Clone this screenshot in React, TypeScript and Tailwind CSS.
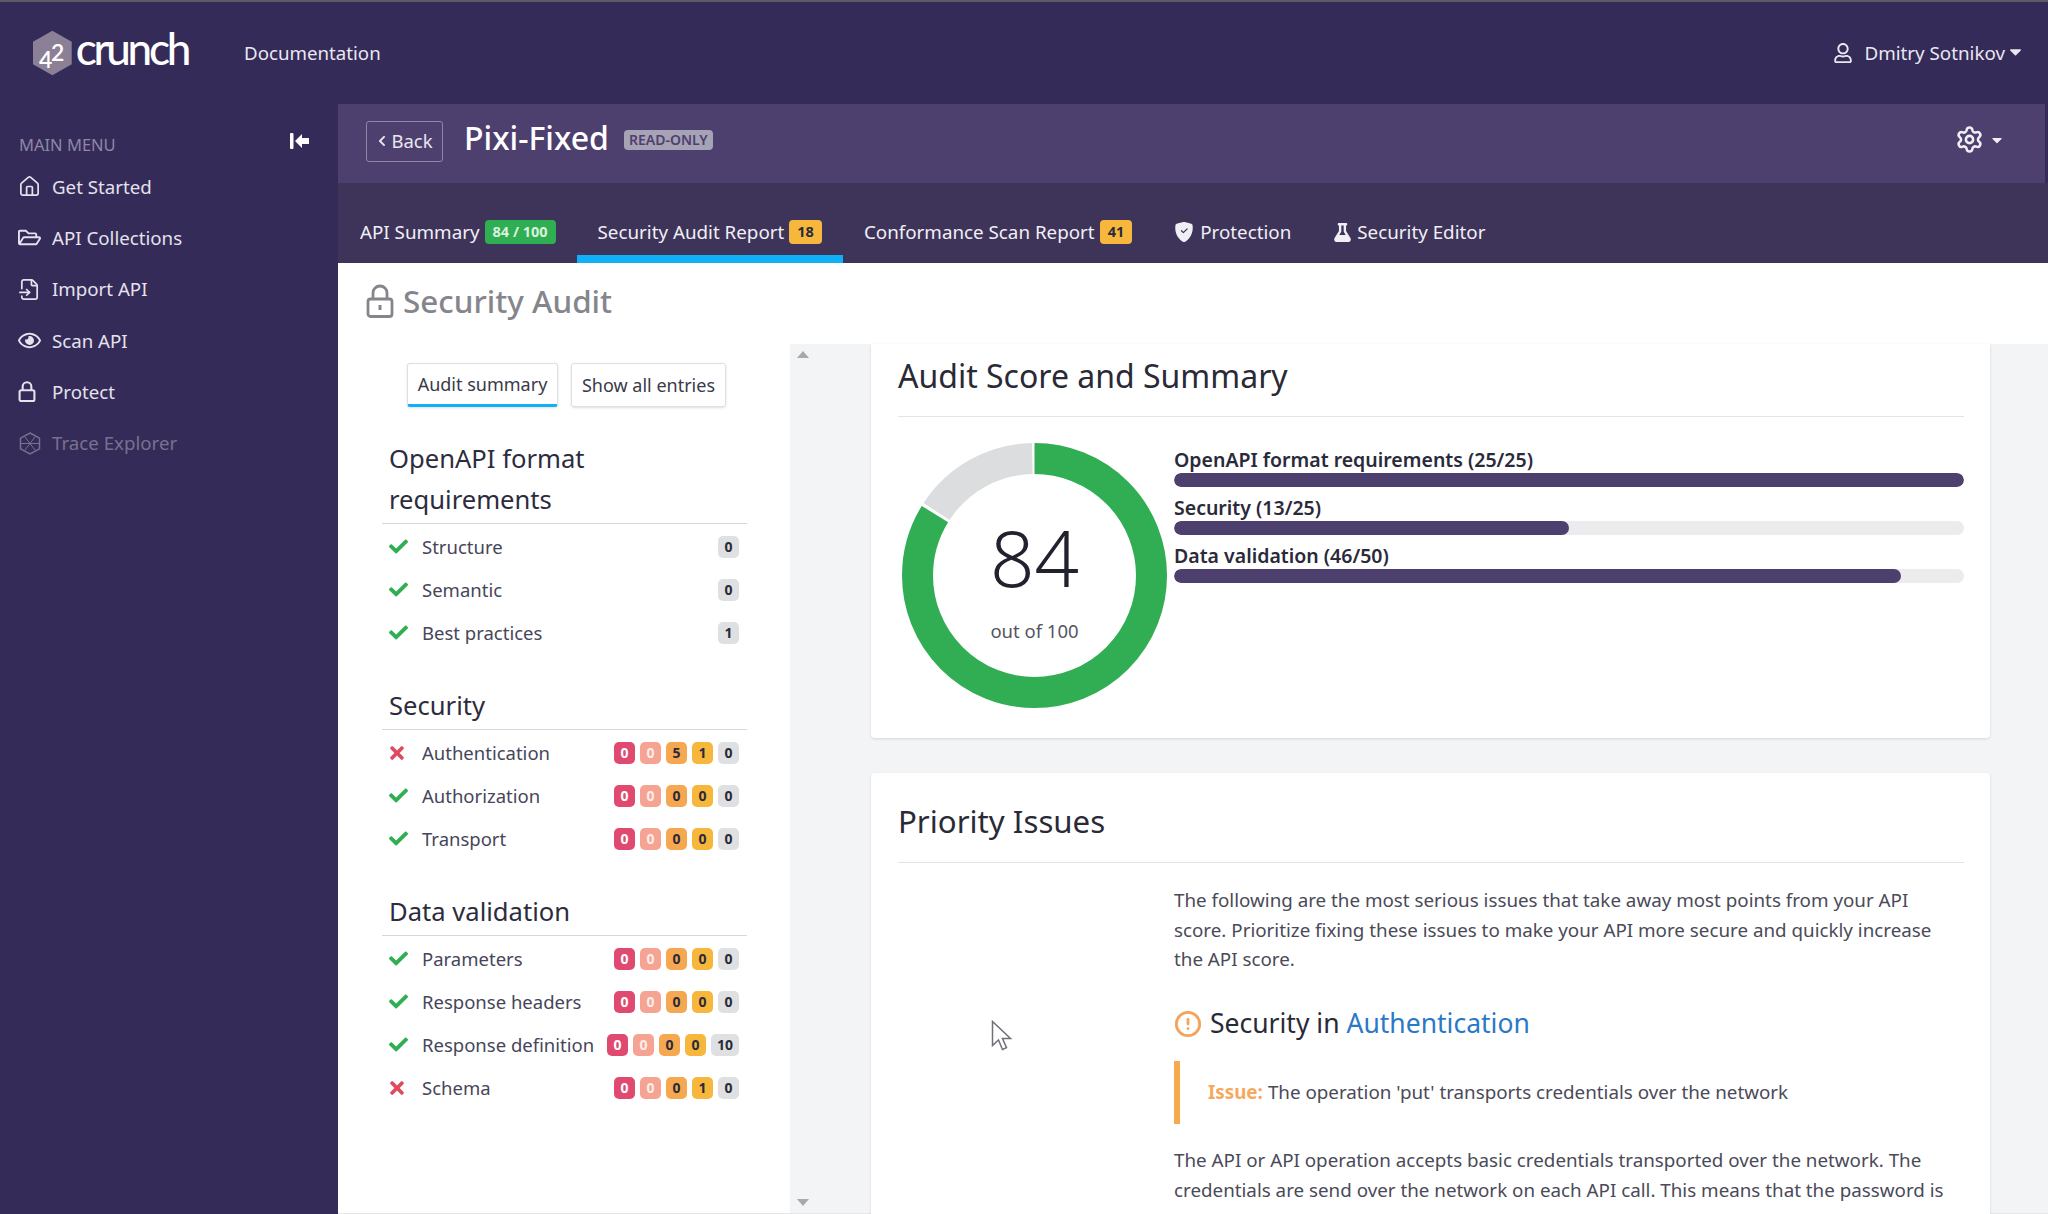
import { CircleAlert, FileInput, House, Settings } from "lucide-react";
import { BsShieldFillCheck } from "react-icons/bs";
import { FaCaretDown, FaCheck, FaChevronLeft, FaFlask, FaRegEye, FaRegFolderOpen, FaRegUser, FaTimes } from "react-icons/fa";

function Padlock({ width, height, strokeWidth, keyhole }: { width: number; height: number; strokeWidth: number; keyhole?: boolean }) {
  return (
    <svg width={width} height={height} viewBox="0 0 28 34" fill="none" stroke="currentColor" strokeWidth={strokeWidth}>
      <path d="M7 15V9a7 7 0 0 1 14 0v6" />
      <rect x="2" y="15" width="24" height="17.5" rx="2.5" />
      {keyhole && <path d="M14 21v5" strokeWidth={3} />}
    </svg>
  );
}

const menu = [
  { label: "Get Started", icon: <House size={23} strokeWidth={1.8} /> },
  { label: "API Collections", icon: <FaRegFolderOpen size={23} /> },
  { label: "Import API", icon: <FileInput size={23} strokeWidth={1.8} /> },
  { label: "Scan API", icon: <FaRegEye size={23} /> },
  { label: "Protect", icon: <Padlock width={18} height={21} strokeWidth={3.4} /> },
];

const sections = [
  {
    title: ["OpenAPI format", "requirements"],
    rows: [
      { name: "Structure", ok: true, counts: [0] },
      { name: "Semantic", ok: true, counts: [0] },
      { name: "Best practices", ok: true, counts: [1] },
    ],
  },
  {
    title: ["Security"],
    rows: [
      { name: "Authentication", ok: false, counts: [0, 0, 5, 1, 0] },
      { name: "Authorization", ok: true, counts: [0, 0, 0, 0, 0] },
      { name: "Transport", ok: true, counts: [0, 0, 0, 0, 0] },
    ],
  },
  {
    title: ["Data validation"],
    rows: [
      { name: "Parameters", ok: true, counts: [0, 0, 0, 0, 0] },
      { name: "Response headers", ok: true, counts: [0, 0, 0, 0, 0] },
      { name: "Response definition", ok: true, counts: [0, 0, 0, 0, 10] },
      { name: "Schema", ok: false, counts: [0, 0, 0, 1, 0] },
    ],
  },
];

const scores = [
  { label: "OpenAPI format requirements (25/25)", pct: 100 },
  { label: "Security (13/25)", pct: 50 },
  { label: "Data validation (46/50)", pct: 92 },
];

const severity = [
  "bg-[#e04a70] text-white",
  "bg-[#f5a392] text-[#fdeee8]",
  "bg-[#f6a851] text-[#2a2a3a]",
  "bg-[#f6b73c] text-[#2a2a3a]",
  "bg-[#dfe0e2] text-[#2a2a3a]",
];

function Badge({ value, className }: { value: number; className: string }) {
  return (
    <span className={`flex h-[22px] min-w-[21px] items-center justify-center rounded-[5px] px-[6px] text-[14px] font-bold ${className}`}>
      {value}
    </span>
  );
}

function TabBadge({ children, className }: { children: React.ReactNode; className: string }) {
  return <span className={`ml-[5px] flex h-[24px] items-center rounded-[4px] px-[8px] text-[14.5px] font-bold ${className}`}>{children}</span>;
}

function Logo() {
  return (
    <div className="relative ml-[33px] flex h-[46px] w-[155px] items-center">
      <svg width="40" height="46" viewBox="0 0 40 46">
        <polygon points="20,0 40,11.5 40,34.5 20,46 0,34.5 0,11.5" fill="#8c8096" />
      </svg>
      <span className="absolute left-[6px] top-[18px] font-['Lato'] text-[23px] font-semibold leading-none text-white">4</span>
      <span className="absolute left-[18px] top-[11px] font-['Lato'] text-[23px] font-semibold leading-none text-white">2</span>
      <span className="ml-[4px] mt-[-11px] font-['Lato'] text-[44px] font-medium leading-none tracking-[-3.3px] text-white">crunch</span>
    </div>
  );
}

function Sidebar() {
  return (
    <aside className="w-[338px] shrink-0 pt-[26px]">
      <div className="flex h-[31px] items-center justify-between pl-[19px] pr-[29px]">
        <span className="text-[16.5px] text-[#8d88a4]">MAIN MENU</span>
        <svg className="-mt-[9px] text-white" width="19" height="16" viewBox="0 0 19 16" fill="currentColor">
          <rect x="0" y="0" width="3.5" height="16" rx="1" />
          <polygon points="5,8 12,1 12,5 19,5 19,11 12,11 12,15" />
        </svg>
      </div>
      {menu.map((item) => (
        <div key={item.label} className="flex h-[51.3px] items-center text-[#e4e2ec]">
          <span className="flex w-[52px] justify-start pl-[18px]">{item.icon}</span>
          <span className="text-[18.7px]">{item.label}</span>
        </div>
      ))}
      <div className="flex h-[51.3px] items-center text-[#77728f]">
        <span className="flex w-[52px] pl-[19px]">
          <svg width="22" height="23" viewBox="0 0 22 23" fill="none" stroke="currentColor" strokeWidth="1.5">
            <polygon points="11,1 20.5,6.2 20.5,16.8 11,22 1.5,16.8 1.5,6.2" />
            <path d="M6 5l10 13M16 5L6 18M2 11.5h18" strokeWidth="1" />
          </svg>
        </span>
        <span className="text-[18.7px]">Trace Explorer</span>
      </div>
    </aside>
  );
}

function Tabs() {
  const tab = "flex h-[55px] items-center border-b-[8px] border-transparent px-[21px] pt-px text-[18.8px] text-[#f1eff6]";
  return (
    <div className="flex h-[80px] items-end bg-[#3e3459] pl-px">
      <div className={tab}>
        API Summary<TabBadge className="bg-[#2fae52] text-[#d9f2df]">84 / 100</TabBadge>
      </div>
      <div className="flex h-[55px] items-center border-b-[8px] border-[#0fb0f6] px-[21px] pt-px text-[18.8px] text-[#f1eff6]">
        Security Audit Report<TabBadge className="bg-[#f6b73c] text-[#2a2a3a]">18</TabBadge>
      </div>
      <div className={tab}>
        Conformance Scan Report<TabBadge className="bg-[#f6b73c] text-[#2a2a3a]">41</TabBadge>
      </div>
      <div className={tab}>
        <BsShieldFillCheck size={20} className="mr-[6px]" />
        Protection
      </div>
      <div className={tab}>
        <FaFlask size={19} className="mr-[5px]" />
        Security Editor
      </div>
    </div>
  );
}

function Row({ name, ok, counts }: { name: string; ok: boolean; counts: number[] }) {
  return (
    <div className="flex h-[43px] items-center pl-[7px] pr-[8px]">
      <span className="w-[33px] shrink-0">
        {ok ? <FaCheck size={19} className="text-[#2fae52]" /> : <FaTimes size={20} className="-ml-[2px] text-[#e04a60]" />}
      </span>
      <span className="whitespace-nowrap text-[18.5px] text-[#46465a]">{name}</span>
      <div className="ml-auto flex gap-[5px]">
        {counts.map((c, i) => (
          <Badge key={i} value={c} className={counts.length === 1 ? severity[4] : severity[i]} />
        ))}
      </div>
    </div>
  );
}

function LeftPanel() {
  return (
    <div className="w-[452px] shrink-0 bg-white">
      <div className="mt-[19px] flex gap-[13px] pl-[69px]">
        <button className="h-[44px] w-[151px] rounded-[3px] border border-[#dedfe2] border-b-[3px] border-b-[#0fb0f6] pt-px text-[18px] text-[#3a3a4a] shadow-sm">
          Audit summary
        </button>
        <button className="h-[44px] w-[155px] rounded-[3px] border border-[#dedfe2] pt-px text-[18px] text-[#3a3a4a] shadow-sm">
          Show all entries
        </button>
      </div>
      <div className="ml-[44px] mt-[31px] w-[365px]">
        {sections.map((s) => (
          <div key={s.title[0]} className="mb-[31px]">
            <div className="border-b border-[#d8d8dc] pb-[3px] pl-[7px] text-[25.6px] leading-[41px] text-[#2c2c3e]">
              {s.title.map((t) => (
                <div key={t}>{t}</div>
              ))}
            </div>
            <div className="mt-px">
              {s.rows.map((r) => (
                <Row key={r.name} {...r} />
              ))}
            </div>
          </div>
        ))}
      </div>
    </div>
  );
}

function Donut() {
  return (
    <div className="relative ml-[4px] h-[265px] w-[265px] shrink-0">
      <svg width="265" height="265" viewBox="0 0 265 265" className="-rotate-90">
        <circle cx="132.5" cy="132.5" r="117" fill="none" stroke="#31ad54" strokeWidth="31" pathLength={100} strokeDasharray="83.8 16.2" />
        <circle cx="132.5" cy="132.5" r="117" fill="none" stroke="#dcdddf" strokeWidth="31" pathLength={100} strokeDasharray="15.5 84.5" strokeDashoffset={-84.2} />
      </svg>
      <div className="absolute inset-0 flex flex-col items-center">
        <span className="mt-[67px] text-[78px] font-light leading-[94px] text-[#22222e]">84</span>
        <span className="mt-[13px] text-[18.5px] text-[#55555f]">out of 100</span>
      </div>
    </div>
  );
}

function ScoreCard() {
  return (
    <section className="h-[394px] rounded-b-[4px] bg-white pl-[27px] pr-[26px] pt-[10px] shadow-[0_1px_3px_rgba(0,0,0,0.12)]">
      <h2 className="h-[44px] text-[32px] leading-[44px] text-[#2a2a36]">Audit Score and Summary</h2>
      <div className="mt-[18px] border-t border-[#e4e4e6]" />
      <div className="mt-[26px] flex">
        <Donut />
        <div className="ml-[7px] flex-1 pt-[2px]">
          {scores.map((s) => (
            <div key={s.label} className="mb-[6px]">
              <div className="h-[28px] text-[19.5px] font-semibold leading-[29px] text-[#2a2a3a]">{s.label}</div>
              <div className="h-[14px] overflow-hidden rounded-[7px] bg-[#ececee]">
                <div className="h-full rounded-[7px] bg-[#4e406e]" style={{ width: `${s.pct}%` }} />
              </div>
            </div>
          ))}
        </div>
      </div>
    </section>
  );
}

function IssuesCard() {
  return (
    <section className="mt-[35px] rounded-t-[4px] bg-white pl-[27px] pr-[26px] pt-[26px] shadow-[0_1px_3px_rgba(0,0,0,0.12)]">
      <h2 className="text-[31.2px] leading-[44px] text-[#2a2a36]">Priority Issues</h2>
      <div className="mt-[19px] border-t border-[#e4e4e6]" />
      <div className="ml-[276px] mt-[23px] text-[18.8px] text-[#4a4a58]">
        <p className="leading-[29.5px]">
          The following are the most serious issues that take away most points from your API
          <br />
          score. Prioritize fixing these issues to make your API more secure and quickly increase
          <br />
          the API score.
        </p>
        <h3 className="mt-[31px] flex h-[36px] items-center text-[26.5px] text-[#2a2a36]">
          <CircleAlert size={28} strokeWidth={2.4} className="mr-[8px] text-[#f4a35c]" />
          Security in&nbsp;<span className="text-[#2a78c8]">Authentication</span>
        </h3>
        <div className="mt-[19px] flex h-[63px] items-center border-l-[6px] border-[#f6a94e] pl-[28px]">
          <span className="mr-[5px] font-bold text-[#f6a95e]">Issue:</span>
          The operation 'put' transports credentials over the network
        </div>
        <p className="mt-[21px] leading-[30.5px]">
          The API or API operation accepts basic credentials transported over the network. The
          <br />
          credentials are send over the network on each API call. This means that the password is
          <br />
          sent over the network every time and could expose them to man-in-the-middle attacks.
        </p>
      </div>
    </section>
  );
}

export default function App() {
  return (
    <div className="relative h-[1214px] w-[2048px] overflow-hidden bg-[#352b58] font-['Noto_Sans',sans-serif]">
      <div className="h-[2px] bg-[#5c5a66]" />
      <header className="flex h-[102px] items-center text-[#e9e7f0]">
        <Logo />
        <span className="ml-[56px] text-[18.7px]">Documentation</span>
        <div className="ml-auto flex items-center pr-[23px] text-[18.8px]">
          <FaRegUser size={20} className="mr-[11px]" />
          Dmitry Sotnikov
          <FaCaretDown size={19} className="-mt-[4px] ml-px" />
        </div>
      </header>
      <div className="flex h-[1110px]">
        <Sidebar />
        <main className="flex min-w-0 flex-1 flex-col">
          <div className="mr-[3px] flex h-[79px] shrink-0 items-center bg-[#4e406e] pb-[7px] pl-[28px] pr-[40px]">
            <button className="mt-[2px] flex h-[41px] w-[77px] items-center justify-center rounded-[3px] border border-[#8f86a8] text-[18.5px] text-[#e9e7f0]">
              <FaChevronLeft size={12} className="mr-[3px]" />
              Back
            </button>
            <h1 className="-mt-[5px] ml-[21px] text-[32px] font-medium text-white">Pixi-Fixed</h1>
            <span className="-mt-[1px] ml-[15px] flex h-[20px] items-center rounded-[4px] bg-[#a7a3b6] px-[5px] text-[14px] font-semibold text-[#4e406e]">READ-ONLY</span>
            <div className="ml-auto -mt-[1px] flex items-center text-[#f1eff6]">
              <Settings size={29} strokeWidth={2.1} />
              <FaCaretDown size={16} className="ml-[5px]" />
            </div>
          </div>
          <Tabs />
          <div className="flex h-[81px] shrink-0 items-center gap-[9px] bg-white pb-[5px] pl-[28px] text-[#85858d]">
            <Padlock width={28} height={34} strokeWidth={2.8} keyhole />
            <span className="text-[31.4px] font-medium">Security Audit</span>
          </div>
          <div className="flex min-h-0 flex-1 border-b border-[#e6e6e8] bg-[#f3f4f6]">
            <LeftPanel />
            <div className="flex w-[81px] shrink-0 flex-col justify-between pb-[7px] pl-[7px] pt-[7px]">
              <svg width="12" height="7" viewBox="0 0 12 7"><polygon points="6,0 12,7 0,7" fill="#a8a8ae" /></svg>
              <svg width="12" height="7" viewBox="0 0 12 7"><polygon points="0,0 12,0 6,7" fill="#a8a8ae" /></svg>
            </div>
            <div className="w-[1119px]">
              <ScoreCard />
              <IssuesCard />
            </div>
          </div>
        </main>
      </div>
      <svg className="absolute left-[991px] top-[1020px]" width="22" height="31" viewBox="0 0 22 31">
        <path d="M1.5 1.5v24l6-5.5 4 9.5 4-1.8-4-9.2h8z" fill="#fff" stroke="#6f7078" strokeWidth="1.5" />
      </svg>
    </div>
  );
}
